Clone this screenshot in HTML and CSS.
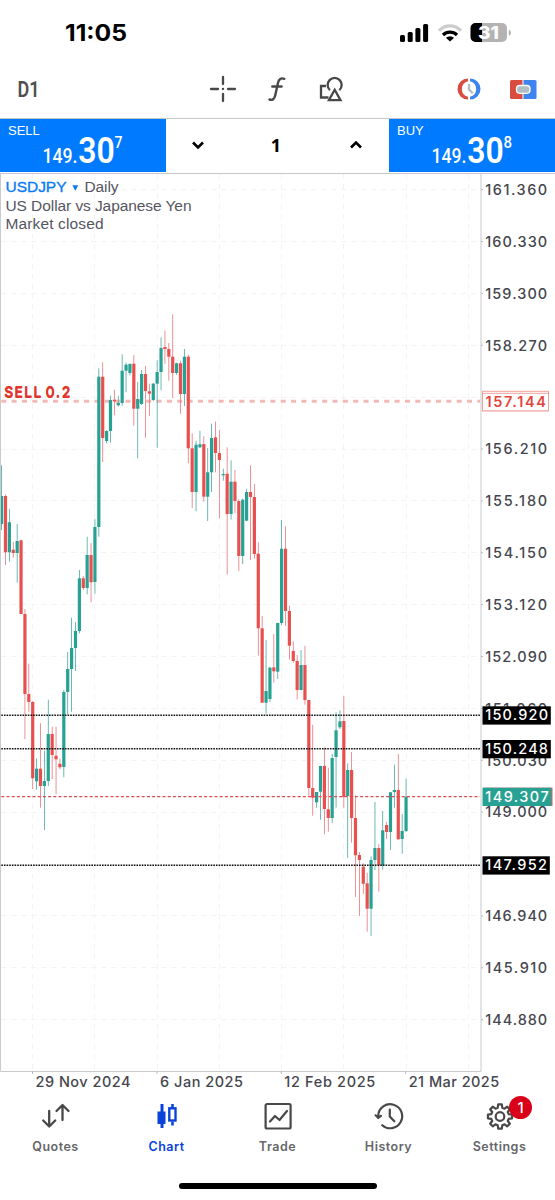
FILE: index.html
```html
<!DOCTYPE html>
<html lang="en">
<head>
<meta charset="utf-8">
<title>USDJPY Chart</title>
<link rel="stylesheet" href="styles.css">
</head>
<body>
<div class="app">
  <header class="status">
    <svg class="clock" width="66" height="28"><text x="1" y="20" textLength="62" lengthAdjust="spacingAndGlyphs">11:05</text></svg>
    <div class="status-icons">
      <svg width="30" height="20" viewBox="0 0 30 20">
        <rect x="1" y="12" width="5" height="7" rx="1.5"/><rect x="8.7" y="9" width="5" height="10" rx="1.5"/><rect x="16.4" y="5" width="5" height="14" rx="1.5"/><rect x="24.1" y="1" width="5" height="18" rx="1.5"/>
      </svg>
      <svg width="26" height="20" viewBox="0 0 26 20" fill="none" stroke-width="3.2">
        <path d="M2 7.6C8.5 1.2 17.500 1.200 24 7.600" stroke="#ccc"/>
        <path d="M6 12C10 8.200 16 8.200 20 12" stroke="#000"/>
        <path d="M13 18.500L8.900 14.800Q13 11.700 17.100 14.800Z" fill="#000"/>
      </svg>
      <svg class="battery" width="42" height="20" viewBox="0 0 42 20">
        <path d="M12 0H32a5 5 0 0 1 5 5V14a5 5 0 0 1-5 5H12Z" fill="#b3b3b3"/>
        <path d="M12 0H5.500a5 5 0 0 0-5 5V14a5 5 0 0 0 5 5H12Z" fill="#000"/>
        <path d="M38.800 6.500Q41 7.200 41 9.700T38.800 12.800Z" fill="#b3b3b3"/>
        <text x="8" y="16" textLength="21" lengthAdjust="spacingAndGlyphs">31</text>
      </svg>
    </div>
  </header>

  <nav class="toolbar">
    <svg class="period" width="30" height="30"><text x="0.500" y="22.500" textLength="22" lengthAdjust="spacingAndGlyphs">D1</text></svg>
    <div class="tools">
      <svg width="28" height="28" viewBox="0 0 28 28" stroke="#484848" stroke-width="2.300" stroke-linecap="round"><path d="M14 2V9M14 19V26M2 14H9M19 14H26M13.900 14H14.100"/></svg>
      <svg width="20" height="28" viewBox="0 0 20 28" fill="none" stroke="#484848" stroke-width="2.400" stroke-linecap="round"><path d="M2.500 24.500C5.500 25.600 7.400 24 8.200 20.500L11 7.800C11.800 4 14 2.500 17.300 3.800M5.300 11.500H14.600"/></svg>
      <svg width="28" height="28" viewBox="0 0 28 28" fill="none" stroke="#484848" stroke-width="2.300"><path d="M9 11H4V22.500H11.500"/><path d="M13 15.200A7 7 0 1 1 22.300 15.200"/><path d="M17.700 14.800L23.500 25.200H11.900Z"/></svg>
    </div>
    <div class="modes">
      <svg width="28" height="24" viewBox="0 0 28 24">
        <path d="M13 1.500A10.400 10.400 0 0 0 13 22.500V19.700A7.900 7.900 0 0 1 13 4.300Z" fill="#d94d41"/>
        <path d="M15 1.500A10.400 10.400 0 0 1 15 22.500V19.700A7.900 7.900 0 0 0 15 4.300Z" fill="#3d84ee"/>
        <path d="M14 7V12.500L17.800 16.300" fill="none" stroke="#aebdc3" stroke-width="2.300"/>
      </svg>
      <svg width="28" height="24" viewBox="0 0 28 24">
        <path d="M2.500 3H13.500V22H2.500Q1 22 1 20.500V4.500Q1 3 2.500 3Z" fill="#d94d41"/>
        <path d="M14.500 3H26Q27.500 3 27.500 4.500V20.500Q27.500 22 26 22H14.500Z" fill="#3d84ee"/>
        <rect x="7.500" y="8.500" width="13.500" height="7.800" rx="3.200" fill="#b0bec5" stroke="#fff" stroke-width="1.300"/>
      </svg>
    </div>
  </nav>

  <section class="trade">
    <div class="quote">
      <span>SELL</span>
      <svg class="price" width="84" height="38"><text x="2.500" y="29" class="p-s" textLength="35" lengthAdjust="spacingAndGlyphs">149.</text><text x="38.300" y="29" class="p-b" textLength="36.500" lengthAdjust="spacingAndGlyphs">30</text><text x="74.500" y="14" class="p-t" textLength="8" lengthAdjust="spacingAndGlyphs">7</text></svg>
    </div>
    <div class="volume">
      <svg width="14" height="12" viewBox="0 0 14 12"><path d="M2 3.500L7 8.500L12 3.500"/></svg>
      <b>1</b>
      <svg width="14" height="12" viewBox="0 0 14 12"><path d="M2 8.500L7 3.500L12 8.500"/></svg>
    </div>
    <div class="quote">
      <span>BUY</span>
      <svg class="price" width="84" height="38"><text x="2.500" y="29" class="p-s" textLength="35" lengthAdjust="spacingAndGlyphs">149.</text><text x="38.300" y="29" class="p-b" textLength="36.500" lengthAdjust="spacingAndGlyphs">30</text><text x="74.500" y="14" class="p-t" textLength="8.500" lengthAdjust="spacingAndGlyphs">8</text></svg>
    </div>
  </section>

  <svg class="chart" id="chart" width="555" height="920" viewBox="0 174 555 920"></svg>

  <footer class="tabs">
    <div class="tab">
      <svg width="32" height="30" viewBox="0 0 32 30" fill="none" stroke="#484848" stroke-width="2.300" stroke-linecap="round" stroke-linejoin="round"><path d="M9.200 9V24M3.200 18.500L9.200 24.500L15.200 18.500M22.500 18V3.500M16.500 9L22.500 3L28.500 9"/></svg>
      <span>Quotes</span>
    </div>
    <div class="tab active">
      <svg width="32" height="30" viewBox="0 0 32 30"><path d="M9.500 2H12.500V9.500H14.500V22H12.500V26H9.500V22H6.500V9.500H9.500Z" fill="#0a43dc"/><path d="M21.500 2V6M21.500 19.500V23.500" stroke="#0a43dc" stroke-width="2.600"/><rect x="18.300" y="6.300" width="6.200" height="12.200" fill="none" stroke="#0a43dc" stroke-width="2.400"/></svg>
      <span>Chart</span>
    </div>
    <div class="tab">
      <svg width="32" height="30" viewBox="0 0 32 30" fill="none" stroke="#484848" stroke-width="2.200" stroke-linejoin="round"><rect x="3.600" y="2" width="25" height="24.500" rx="1.500"/><path d="M8 19.500L13 14L17.500 18L25 9" stroke-linecap="round"/></svg>
      <span>Trade</span>
    </div>
    <div class="tab">
      <svg width="32" height="30" viewBox="0 0 32 30" fill="none" stroke="#484848" stroke-width="2.200" stroke-linecap="round"><path d="M5.200 13.500A12 12 0 1 1 9.200 23.200"/><path d="M16.800 7.500V14.500L21.300 19.300"/><path d="M2.200 13.200L8.500 14.300L5 17.200Z" fill="#484848" stroke="none"/><path d="M2.600 13.300L5.200 15.600L8 13.800"/></svg>
      <span>History</span>
    </div>
    <div class="tab">
      <svg width="32" height="30" viewBox="0 0 32 30" fill="none" stroke="#484848" stroke-width="2.200" stroke-linejoin="round"><path id="gear"/><circle cx="16" cy="14.500" r="4.300"/></svg>
      <span>Settings</span>
      <i class="badge">1</i>
    </div>
  </footer>
  <div class="home"></div>
</div>
<script src="chart.js"></script>
</body>
</html>
```
FILE: styles.css
```css
* { box-sizing: border-box; }
body { margin: 0; background: #fff; }
.app { width: 555px; height: 1200px; overflow: hidden; display: flex; flex-direction: column; font-family: Inter, "Liberation Sans", sans-serif; }
svg { display: block; flex: none; overflow: visible; }

.status { height: 62px; padding: 21px 43px 0 64px; display: flex; justify-content: space-between; align-items: flex-start; }
.clock text { font-size: 23px; font-weight: 700; }
.status-icons { display: flex; gap: 7px; padding-top: 2px; }
.status-icons svg:nth-child(2) { margin-left: 1px; }
.battery text { font-size: 17px; font-weight: 800; fill: #fff; }

.toolbar { height: 56px; padding: 0 18px 2px 17px; display: flex; align-items: center; justify-content: space-between; }
.period text { font: 600 22.500px Roboto, sans-serif; fill: #505050; }
.tools { display: flex; align-items: center; gap: 30px; padding-left: 162px; margin-right: auto; }
.modes { display: flex; gap: 26px; }

.trade { height: 56px; border-top: 1px solid #c6c7cb; border-bottom: 1px solid #c6c7cb; display: flex; }
.quote { width: 166px; background: #007aff; color: #fff; display: flex; padding: 0 0 0 8px; height: 53px; }
.quote span { font: 13px/24px "Liberation Sans", sans-serif; width: 32px; white-space: nowrap; }
.price { margin-top: 14.500px; fill: #fff; font-family: Roboto, sans-serif; font-weight: 500; }
.p-s { font-size: 20.500px; }
.p-b { font-size: 37px; font-weight: 600; }
.p-t { font-size: 17px; }
.volume { flex: 1; display: flex; align-items: center; justify-content: space-between; padding: 0 26px 2px 25px; }
.volume b { font: 700 18px "Noto Sans", sans-serif; margin-right: 2px; }
.volume path { fill: none; stroke: #000; stroke-width: 2.600; }

.axis { font-size: 14.500px; font-weight: 500; fill: #45464e; }
.title { font-family: "Liberation Sans", sans-serif; font-size: 15.500px; fill: #55565f; }
.symbol { fill: #087cf7; stroke: #087cf7; stroke-width: .35px; }
.grid { stroke: #f3f3f5; stroke-width: 1; stroke-dasharray: 5 5; }
.frame { stroke: #c9cacd; stroke-width: 1; fill: none; }
.tick { stroke: #b9babd; stroke-width: 1; }
.order { stroke: #f2b9b7; stroke-width: 3; stroke-dasharray: 5 5.350; }
.pending { stroke: #111; stroke-width: 1.500; stroke-dasharray: 1.600 1.050; }
.current { stroke: #dc4b55; stroke-width: 1.300; stroke-dasharray: 3 2.200; }
.order-name { font-size: 14px; font-weight: 600; fill: #e2352b; }

.tabs { height: 80px; display: flex; }
.tab { width: 111px; padding-top: 8px; display: flex; flex-direction: column; align-items: center; position: relative; color: #66676a; }
.tab span { font-size: 12.500px; line-height: 16px; font-weight: 600; letter-spacing: .5px; margin-top: 7px; }
.tab.active { color: #0a43dc; }
.badge { position: absolute; left: 65px; top: 2px; width: 23px; height: 23px; border-radius: 50%; background: #da0019; color: #fff; font: 500 15px/23px Inter, sans-serif; text-align: center; }
.home { width: 198px; height: 6px; border-radius: 3px; background: #000; margin: 9px 0 0 179px; flex: none; }
```
FILE: chart.js
```js
// Each candle: direction, wick top, body top, body bottom, wick bottom
const candles = `G 465.3 496 524 530|R 494.5 496 552.3 565|G 508.7 522.3 552.3 561.7|R 541.7 549.7 553 557.7|G 524 541 553 582.7|R 539.7 540.3 614 614|R 609 614 694 739|R 663.7 694 702 711.7|R 701 702 778.3 789|G 758.3 768.7 781.3 789.7|R 723.3 768.7 786 807.7|G 750.7 781 786 830|G 699.7 734 781 786|R 726.7 734 755 779.3|R 726.7 755.7 759.3 794.3|R 758.7 763.7 767.3 769.3|G 690 692 767 777.3|G 652 669 692 714.3|G 617.7 648 669 711.7|G 622 631 648 671|G 570 578.3 631 633.3|R 576 578.3 588 590|G 536.7 555 588 594.3|R 543 555 582.3 602.3|G 519.3 527 582 593.7|G 368.3 376.7 527 536.7|R 362.3 376.7 438 462|G 430.3 431 441 443.3|G 395.7 400 431 442.7|R 389.7 399.7 401.3 415.3|G 395.7 403 405.3 406.7|G 354.3 370.7 403 405.7|G 362.7 364.7 370.7 392.3|G 363.3 364 373 375.3|R 355 363.7 408.7 425.7|G 382 399 408.7 458.3|G 370 374 404 405|R 366 374 391 437.7|R 383.7 391.3 393.7 416|G 383 383.7 400 401|G 360.3 372 383.7 447.7|G 337.3 348 372 390.3|R 330.7 347 349 363.7|R 343 349 356.7 380.7|R 314.3 356.7 373 398|G 362.7 363.3 373 374.7|R 360.7 363.3 394 413.7|G 349 356.7 394 406|R 354.7 356.7 448.3 463.3|R 433.3 448.3 492 508|G 440.7 444.7 492 511.3|G 430.7 444.3 447.3 448|R 436.3 444 496.7 501.7|G 448 472.3 496.7 521|G 423.7 438 472.3 492|R 421.7 437.3 453 472.3|R 430 453 460 518.3|G 468.7 474 475.3 480.7|R 447.3 473.7 514 574.7|G 460.3 481.7 514 519.7|R 470 481.7 501 513.3|R 499.3 501 556 571|G 498.7 499.7 556 564|G 489 492 520.7 521.3|R 465.3 492 497 560|R 484 497 554 558.7|R 542.3 553.7 628.3 655.7|R 616 628.3 702.7 703|G 640 691 702.7 713.7|G 666.7 667.7 699 702|R 634 667.3 671.3 682.7|G 622.7 623 671.7 679|G 520 548.7 623 625|R 526.3 548.7 611 626|R 605.7 611 645.7 659.7|R 641.3 651 661 662.7|R 655 661 690 699.3|G 650 665 690 690.3|R 645.7 665 700 704.7|R 700 700 788 795.7|R 724.7 788 797.7 815.7|G 792 792 802.3 807.7|G 765.7 766 791.7 819.7|R 747.3 766 809 834.3|R 767.7 809.3 818 831.7|G 754 758 818 823|G 712.3 730.3 757 807.7|G 710.3 721.3 727.3 729|R 696 721 797 807.7|G 763.3 770 796 858|R 752 770 818 842.7|R 795.3 818 855.3 897|R 852 855 860 916|R 863.3 866.7 883.7 893.7|R 872.7 883.3 908.7 931.7|G 856.3 860 908.7 936|G 802 848 860 870|R 844 848 865.3 891.7|G 811 830.3 865.3 869.7|R 821.7 825 832 839|G 792 792.3 832 850|G 764.7 790 792 807.7|R 754 790 839.3 839.7|G 814 831 839 853.7|G 778.7 796.7 831 832`.split('|').map(s => s.split(' '));

const out = [];
const hline = (y, cls, x2 = 480) => out.push(`<line class="${cls}" x1="1.3" x2="${x2}" y1="${y}" y2="${y}"/>`);
const text = (x, y, w, s, cls, extra = '') => out.push(`<text class="${cls}" x="${x}" y="${y}" textLength="${w}" ${extra}>${s}</text>`);

const rows = [];
for (let i = 0; i <= 16; i++) rows.push([189.6 + i * 51.88, (161.36 - i * 1.03).toFixed(3)]);

for (const [y] of rows) hline(Math.round(y - 0.5) + 0.5, 'grid');
for (let i = 0; i < 8; i++) {
  const x = Math.round(32 + i * 62.25) + 0.5;
  out.push(`<line class="grid" x1="${x}" x2="${x}" y1="174" y2="1070"/>`);
}
hline(401.2, 'order');

candles.forEach(([dir, hi, top, bottom, lo], i) => {
  const x = 1.6 + i * 3.889;
  const up = dir === 'G';
  out.push(`<rect x="${x - 0.4}" y="${hi}" width="0.8" height="${lo - hi}" fill="${up ? '#46a99f' : '#e8777a'}"/>`);
  out.push(`<rect x="${x - 1.6}" y="${top}" width="3.2" height="${bottom - top}" fill="${up ? '#27a193' : '#e8504f'}"/>`);
});

for (const y of [715.2, 748.8, 865.3]) hline(y, 'pending');
hline(796.7, 'current');
out.push('<path class="frame" d="M0.500 174V1071.500H481V174"/>');

rows.forEach(([y, label], i) => {
  if (i === 4 || i === 13) return;
  out.push(`<line class="tick" x1="481" x2="483" y1="${y}" y2="${y}"/>`);
  text(485.2, y + 5.3, 62, label, 'axis');
});

out.push('<rect x="482.5" y="391.300" width="66" height="19.500" fill="#fff" stroke="#f0a09c"/>');
out.push('<rect x="482.5" y="393.300" width="66" height="17.500" fill="#fff" stroke="#f0a09c"/>');
text(485.5, 407.2, 60.5, '157.144', 'axis', 'style="fill:#e2453c;font-weight:600"');
out.push('<rect x="484" y="787.700" width="68.500" height="18.300" fill="#f05a55"/>');
for (const [y, w, label, fill] of [[706.3, 68.3, '150.920', '#000'], [740, 68.3, '150.248', '#000'], [787.7, 69, '149.307', '#27a193'], [856.3, 67.3, '147.952', '#000']]) {
  out.push(`<rect x="482.5" y="${y}" width="${w}" height="18.300" fill="${fill}"/>`);
  text(485.2, y + 14.1, w - 5.5, label, 'axis', 'style="fill:#fff"');
}

// Two overlapping sell orders share the same label slot
for (const y of [396.6, 397.6]) {
  out.push(`<text class="order-name" y="${y}"><tspan x="4.300" textLength="37">SELL</tspan><tspan x="45.500" textLength="25">0.2</tspan></text>`);
}

text(5.5, 192.3, 61, 'USDJPY', 'title symbol');
out.push('<path d="M72.300 185.300H78.300L75.300 190.800Z" fill="#087cf7"/>');
text(84.5, 192.3, 34, 'Daily', 'title');
text(5.5, 211.4, 186, 'US Dollar vs Japanese Yen', 'title');
text(5.5, 229, 98, 'Market closed', 'title');

for (const [x, w, label] of [[35.5, 95, '29 Nov 2024'], [160, 83, '6 Jan 2025'], [284.3, 91, '12 Feb 2025'], [408.7, 90.500, '21 Mar 2025']]) {
  out.push(`<line class="tick" x1="${x - 3}" x2="${x - 3}" y1="1071" y2="1074"/>`);
  text(x, 1086.8, w, label, 'axis');
}
document.getElementById('chart').innerHTML = out.join('');

// Eight-toothed gear outline
const pts = [];
for (let k = 0; k < 8; k++) {
  for (const [d, r] of [[-15, 9], [-8.500, 12.200], [8.500, 12.200], [15, 9]]) {
    const a = (k * 45 + d) * Math.PI / 180;
    pts.push(`${(16 + r * Math.sin(a)).toFixed(2)} ${(14.5 - r * Math.cos(a)).toFixed(2)}`);
  }
}
document.getElementById('gear').setAttribute('d', `M${pts.join('L')}Z`);
```
